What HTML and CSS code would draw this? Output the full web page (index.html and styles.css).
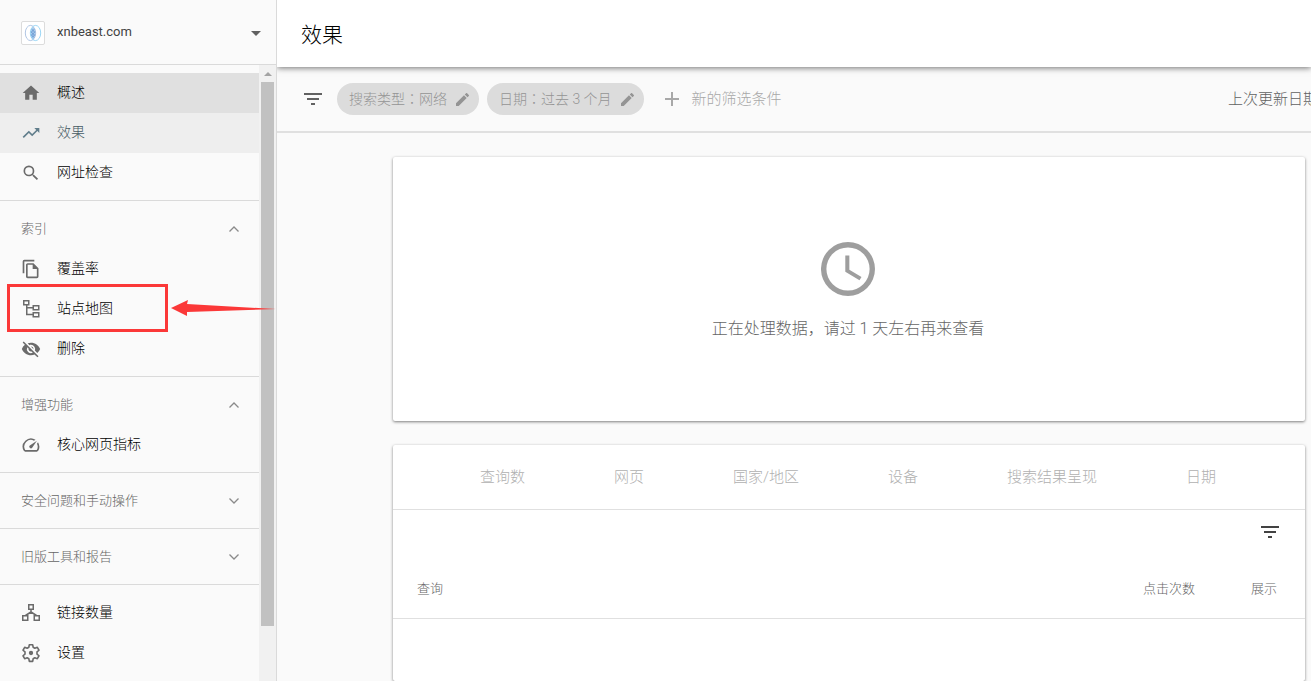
FILE: index.html
```html
<!DOCTYPE html>
<html lang="zh-CN">
<head>
<meta charset="utf-8">
<title>效果</title>
<link rel="stylesheet" href="styles.css">
</head>
<body>
<div class="app">
  <aside class="sidebar">
    <button class="property" type="button">
      <svg class="favicon" viewBox="0 0 22 22" aria-hidden="true">
        <path d="M11 4.500c3.200 3.600 3.200 10 0 13.400c-3.200-3.400-3.200-9.800 0-13.400z" fill="#a9cdee"/>
        <path d="M9.500 7l3.500 3.500M8.800 9.500l4 4M9 12.500l3 3M12.500 7L9 10.500M13.200 9.500l-4 4M13 12.500l-3 3" stroke="#5f8fca" stroke-width=".8"/>
        <ellipse cx="8.500" cy="11" rx="5.200" ry="7.600" fill="none" stroke="#9db8dc" stroke-width=".8"/>
        <ellipse cx="13.500" cy="11" rx="5.200" ry="7.600" fill="none" stroke="#84cdf2" stroke-width=".8"/>
      </svg>
      <span class="property-name">xnbeast.com</span>
      <svg class="caret" viewBox="0 0 10 5" aria-hidden="true"><path d="M0 0h10L5 5z"/></svg>
    </button>
    <div class="nav-wrap">
      <nav class="nav">
        <div class="group">
          <a class="item hovered" href="#"><svg class="icon" viewBox="0 0 24 24"><path d="M10 20v-6h4v6h5v-8h3L12 3 2 12h3v8z"/></svg><span class="label">概述</span></a>
          <a class="item current" href="#"><svg class="icon" viewBox="0 0 24 24"><path d="M16 6l2.290 2.290-4.880 4.880-4-4L2 16.590 3.410 18l6-6 4 4 6.300-6.290L22 12V6z"/></svg><span class="label">效果</span></a>
          <a class="item" href="#"><svg class="icon" viewBox="0 0 24 24"><path d="M15.500 14h-.79l-.28-.27A6.470 6.470 0 0 0 16 9.500 6.500 6.500 0 1 0 9.500 16c1.610 0 3.090-.59 4.230-1.570l.27.28v.79l5 4.990L20.490 19l-4.990-5zm-6 0a4.500 4.500 0 1 1 0-9 4.500 4.500 0 0 1 0 9z"/></svg><span class="label">网址检查</span></a>
        </div>
        <div class="group">
          <button class="heading" type="button" aria-expanded="true"><span class="heading-label">索引</span><svg class="chevron" viewBox="0 0 10 6"><path d="M.5 5.500L5 1l4.500 4.500"/></svg></button>
          <a class="item" href="#"><svg class="icon" viewBox="0 0 24 24"><path d="M16 1H4a2 2 0 0 0-2 2v14h2V3h12V1zm-1 4H8a2 2 0 0 0-2 2v14c0 1.100.9 2 2 2h11a2 2 0 0 0 2-2V11l-6-6zM8 21V7h6v5h5v9H8z"/></svg><span class="label">覆盖率</span></a>
          <a class="item" href="#"><svg class="icon line" viewBox="0 0 20 20"><path d="M2.750 1.750h5v4h-5zM12.250 6.750h5.500v4h-5.500zM12.250 13.750h5.500v4h-5.500zM5.750 6v9.500H12M5.750 8.750H12"/></svg><span class="label">站点地图</span>
            <span class="mark-box"></span>
            <svg class="mark-arrow" viewBox="0 0 105 16" aria-hidden="true"><path d="M0 8L17 0L16 4L105 9L16 12L16 16Z"/></svg>
          </a>
          <a class="item" href="#"><svg class="icon" viewBox="0 0 24 24"><path d="M12 7a5 5 0 0 1 4.640 6.830l2.920 2.920A11.820 11.820 0 0 0 22.990 12C21.260 7.610 16.990 4.500 11.990 4.500c-1.400 0-2.740.25-3.980.7l2.160 2.160C10.740 7.130 11.350 7 12 7zM2 4.270l2.280 2.280.46.46A11.800 11.800 0 0 0 1 12c1.730 4.390 6 7.500 11 7.500 1.550 0 3.030-.3 4.380-.84l.42.42L19.730 22 21 20.730 3.270 3 2 4.270zM7.530 9.800l1.550 1.550A3 3 0 0 0 12.650 14.920l1.550 1.550A5 5 0 0 1 7.530 9.800zm4.310-.78l3.150 3.150.02-.16a3 3 0 0 0-3.170-2.990z"/></svg><span class="label">删除</span></a>
        </div>
        <div class="group">
          <button class="heading" type="button" aria-expanded="true"><span class="heading-label">增强功能</span><svg class="chevron" viewBox="0 0 10 6"><path d="M.5 5.500L5 1l4.500 4.500"/></svg></button>
          <a class="item" href="#"><svg class="icon" viewBox="0 0 24 24"><path d="M20.380 8.570l-1.230 1.850a8 8 0 0 1-.22 7.580H5.070A8 8 0 0 1 15.580 6.850l1.850-1.230A10 10 0 0 0 3.350 19a2 2 0 0 0 1.720 1h13.850a2 2 0 0 0 1.740-1 10 10 0 0 0-.27-10.440zm-9.790 6.840a2 2 0 0 0 2.830 0l5.660-8.490-8.490 5.660a2 2 0 0 0 0 2.830z"/></svg><span class="label">核心网页指标</span></a>
        </div>
        <div class="group">
          <button class="heading" type="button" aria-expanded="false"><span class="heading-label">安全问题和手动操作</span><svg class="chevron" viewBox="0 0 10 6"><path d="M.5.5L5 5 9.500.5"/></svg></button>
        </div>
        <div class="group">
          <button class="heading" type="button" aria-expanded="false"><span class="heading-label">旧版工具和报告</span><svg class="chevron" viewBox="0 0 10 6"><path d="M.5.5L5 5 9.500.5"/></svg></button>
        </div>
        <div class="group">
          <a class="item" href="#"><svg class="icon line" viewBox="0 0 20 20"><path d="M7.750 1.750h4.500v4.500h-4.500zM1.750 12.750h5v4.500h-5zM13.250 12.750h5v4.500h-5zM10 6.500v3M4.500 12.500l5.500-3.500 5.500 3.500"/></svg><span class="label">链接数量</span></a>
          <a class="item" href="#"><svg class="icon line" viewBox="0 0 24 24"><path d="M10 2h4l.6 3.100 2 1.150 3-1.050 2 3.500-2.400 2.050v2.500l2.400 2.050-2 3.500-3-1.050-2 1.150L14 22h-4l-.6-3.100-2-1.150-3 1.050-2-3.500 2.400-2.050v-2.500L2.400 8.700l2-3.500 3 1.050 2-1.150z" stroke-width="1.900" stroke-linejoin="round"/><circle cx="12" cy="12" r="2.600" fill="currentColor" stroke="none"/></svg><span class="label">设置</span></a>
        </div>
      </nav>
      <div class="scrollbar" aria-hidden="true">
        <svg class="scroll-up" viewBox="0 0 8 4"><path d="M0 4l4-4 4 4z"/></svg>
        <div class="thumb"></div>
      </div>
    </div>
  </aside>
  <main class="main">
    <header class="topbar"><h1 class="title">效果</h1></header>
    <div class="filters">
      <svg class="filter-icon" viewBox="0 0 18 12"><path d="M0 0h18v2H0zM3 5h12v2H3zM7 10h4v2H7z"/></svg>
      <button class="chip" type="button" disabled><span class="label">搜索类型<span class="colon" lang="zh-TW">：</span>网络</span><svg class="pencil" viewBox="3 3 18 18"><path d="M3 17.250V21h3.750L17.810 9.940l-3.750-3.750zM20.710 7.040a1 1 0 0 0 0-1.410l-2.340-2.340a1 1 0 0 0-1.410 0l-1.830 1.830 3.750 3.750z"/></svg></button>
      <button class="chip" type="button" disabled><span class="label">日期<span class="colon" lang="zh-TW">：</span>过去 3 个月</span><svg class="pencil" viewBox="3 3 18 18"><path d="M3 17.250V21h3.750L17.810 9.940l-3.750-3.750zM20.710 7.040a1 1 0 0 0 0-1.410l-2.340-2.340a1 1 0 0 0-1.410 0l-1.830 1.830 3.750 3.750z"/></svg></button>
      <button class="add" type="button" disabled><svg class="plus" viewBox="0 0 14 14"><path d="M6 0h2v6h6v2H8v6H6V8H0V6h6z"/></svg><span class="label">新的筛选条件</span></button>
      <span class="updated label">上次更新日期</span>
    </div>
    <div class="content">
      <section class="card notice">
        <svg class="clock" viewBox="2 2 20 20"><path d="M11.990 2a10 10 0 1 0 .02 20 10 10 0 0 0-.02-20zM12 20a8 8 0 1 1 0-16 8 8 0 0 1 0 16zm-1-13h1.500v5.250l4.500 2.670-.75 1.230L11 13z"/></svg>
        <p class="notice-text">正在处理数据，请过 1 天左右再来查看</p>
      </section>
      <section class="card report">
        <div class="tabs" role="tablist">
          <button class="tab" role="tab" type="button">查询数</button>
          <button class="tab" role="tab" type="button">网页</button>
          <button class="tab" role="tab" type="button">国家/地区</button>
          <button class="tab" role="tab" type="button">设备</button>
          <button class="tab" role="tab" type="button">搜索结果呈现</button>
          <button class="tab" role="tab" type="button">日期</button>
        </div>
        <div class="tools"><button class="tool" type="button" aria-label="过滤"><svg class="filter-icon" viewBox="0 0 18 12"><path d="M0 0h18v2H0zM3 5h12v2H3zM7 10h4v2H7z"/></svg></button></div>
        <table class="table">
          <thead><tr><th>查询</th><th class="num clicks">点击次数</th><th class="num shows">展示</th></tr></thead>
        </table>
      </section>
    </div>
  </main>
</div>
</body>
</html>
```
FILE: styles.css
```css
* { box-sizing: border-box; }
body {
  margin: 0;
  background: #fafafa;
  color: #000;
  font-family: Roboto, "Noto Sans CJK SC", sans-serif;
  font-size: 14px;
  font-weight: 300;
}
button {
  margin: 0;
  padding: 0;
  border: 0;
  background: none;
  color: inherit;
  font: inherit;
  text-align: left;
}
svg { display: block; flex: none; fill: currentColor; }

.app { display: flex; height: 100vh; overflow: hidden; }

.sidebar {
  position: relative;
  z-index: 1;
  display: flex;
  flex-direction: column;
  flex: none;
  width: 277px;
  border-right: 1px solid #dadada;
}
.property {
  display: flex;
  align-items: center;
  flex: none;
  height: 65px;
  padding: 2px 15px 0 21px;
  border-bottom: 1px solid #dadada;
}
.favicon {
  width: 24px;
  height: 24px;
  border: 1px solid #dcdcdc;
  border-radius: 2px;
  background: #fff;
}
.property-name {
  flex: 1;
  margin-left: 12px;
  padding-bottom: 4px;
  color: #424242;
  font-size: 13px;
  font-weight: 400;
}
.caret { width: 10px; height: 5px; color: #616161; }

.nav-wrap { display: flex; flex: 1; min-height: 0; }
.nav { flex: 1; }
.group { padding: 8px 0 7px; border-top: 1px solid #dadada; }
.group:first-child { border-top: 0; }
.item {
  position: relative;
  display: flex;
  align-items: center;
  gap: 16px;
  height: 40px;
  padding: 0 21px;
  color: #000;
  line-height: 20px;
  text-decoration: none;
}
.label { padding-bottom: 2px; }
.hovered { background: #e0e0e0; }
.current { background: #eee; color: #455a64; }
.icon { width: 20px; height: 20px; color: #6b6b6b; }
.current .icon { color: #607d8b; }
.line { fill: none; stroke: currentColor; stroke-width: 1.5; }
.heading {
  display: flex;
  align-items: center;
  justify-content: space-between;
  width: 100%;
  height: 40px;
  padding: 0 20px 0 21px;
  color: #666;
  font-size: 13px;
}
.heading-label { padding-bottom: 4px; }
.chevron { width: 10px; height: 6px; fill: none; stroke: #8a8a8a; stroke-width: 1.3; }

.mark-box {
  position: absolute;
  top: -5px;
  left: 7px;
  width: 161px;
  height: 48px;
  border: 3px solid #fb3838;
}
.mark-arrow {
  position: absolute;
  top: 11px;
  left: 171px;
  z-index: 2;
  width: 105px;
  height: 16px;
  fill: #fb3838;
}

.scrollbar {
  display: flex;
  flex-direction: column;
  align-items: center;
  width: 17px;
  padding: 7px 2px 0;
  background: #f1f1f1;
}
.scroll-up { width: 8px; height: 4px; margin-bottom: 6px; color: #a3a3a3; }
.thumb { width: 13px; height: 89.3%; background: #c1c1c1; }

.main { display: flex; flex-direction: column; flex: 1; min-width: 0; overflow: hidden; }
.topbar {
  position: relative;
  display: flex;
  align-items: center;
  flex: none;
  height: 67px;
  padding: 0 24px 2px;
  background: #fff;
  box-shadow: 0 1px 6px rgba(0, 0, 0, .55);
}
.title { margin: 0; font-size: 21px; font-weight: 300; }
.filters {
  display: flex;
  align-items: center;
  flex: none;
  height: 66px;
  padding-left: 27px;
  border-bottom: 2px solid #e0e0e0;
  white-space: nowrap;
}
.filter-icon { width: 18px; height: 12px; color: #616161; }
.chip {
  display: flex;
  align-items: center;
  gap: 9px;
  height: 32px;
  margin-left: 8px;
  padding: 0 10px 0 12px;
  border-radius: 16px;
  background: #dcdcdc;
  color: #949494;
}
.filter-icon + .chip { margin-left: 15px; }
.colon { font-family: "Noto Sans CJK TC", sans-serif; }
.pencil { width: 13px; height: 13px; }
.add {
  display: flex;
  align-items: center;
  gap: 13px;
  margin-left: 21px;
  color: #a8a8a8;
  font-size: 15px;
}
.plus { width: 14px; height: 14px; }
.updated { margin: 0 -7px 0 auto; color: #616161; font-size: 15px; }
.add .label, .updated { padding-bottom: 4px; }

.content {
  display: flex;
  flex-direction: column;
  flex: 1;
  gap: 24px;
  min-height: 0;
  padding: 24px 6px 0 116px;
}
.card {
  border-radius: 2px;
  background: #fff;
  box-shadow: 0 1px 3px rgba(0, 0, 0, .5);
}
.notice {
  display: flex;
  flex-direction: column;
  align-items: center;
  flex: none;
  padding: 85px 26px 80px 24px;
  color: #666;
}
.clock { width: 54px; height: 54px; color: #9e9e9e; }
.notice-text { margin: 21px 0 0; font-size: 16px; line-height: 24px; }
.report { flex: 1; }
.tabs {
  display: flex;
  justify-content: center;
  gap: 89px;
  height: 65px;
  padding: 0 2px 4px 0;
  border-bottom: 1px solid #e0e0e0;
  color: #b0b0b0;
  font-size: 15px;
}
.tools { display: flex; justify-content: flex-end; padding: 16px 26px 16px; }
.tools .filter-icon { color: #424242; }
.table { width: 100%; border-collapse: collapse; color: #666; font-size: 13px; }
.table th {
  height: 64px;
  padding: 4px 24px 0;
  border-bottom: 1px solid #e0e0e0;
  font-weight: 300;
  text-align: left;
}
.table .num { padding: 4px 28px 0 0; text-align: right; }
.table .shows { width: 82px; }
```
